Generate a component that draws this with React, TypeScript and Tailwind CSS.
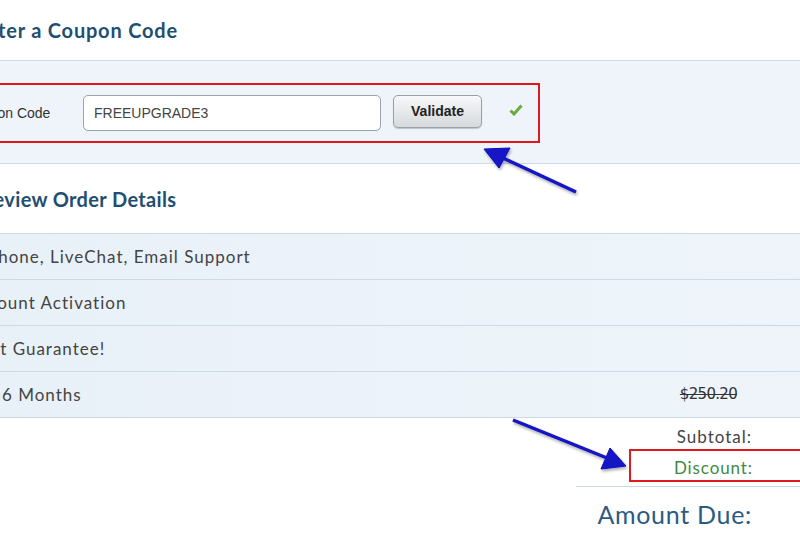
import React from "react";

const rows = [
    { text: "Phone, LiveChat, Email Support", shift: "-ml-[13px]", price: "" },
    { text: "Account Activation", shift: "-ml-[33px]", price: "" },
    { text: "Best Guarantee!", shift: "-ml-[30px]", price: "" },
    { text: "6 Months", shift: "ml-[2px]", price: "$250.20" },
];

const Arrows = () => (
    <svg className="absolute inset-0 pointer-events-none" width="800" height="533" viewBox="0 0 800 533">
        <defs>
            <filter id="sh" x="-20%" y="-20%" width="140%" height="140%">
                <feDropShadow dx="1" dy="2" stdDeviation="1.5" floodColor="#000" floodOpacity="0.35" />
            </filter>
        </defs>
        <g filter="url(#sh)" fill="#1212c4" stroke="#1212c4">
            <line x1="576" y1="192" x2="503" y2="158" strokeWidth="3.5" />
            <polygon points="484,149 510,148 499,168" strokeWidth="1" />
            <line x1="513" y1="420" x2="607" y2="458" strokeWidth="3.5" />
            <polygon points="626,466 601,469 610,448" strokeWidth="1" />
        </g>
    </svg>
);

export default function App() {
    return (
        <div className="relative w-[800px] h-[533px] overflow-hidden bg-white" style={{ fontFamily: "Lato, 'Open Sans', sans-serif" }}>
            <div className="h-[60px] flex items-center">
                <h1 className="-ml-[26px] text-[20px] font-bold tracking-[0.8px] text-[#1f4f71] whitespace-nowrap">Enter a Coupon Code</h1>
            </div>

            <div className="h-[104px] border-y border-[#cfdbe7] bg-[#eef4fa] pt-[22px]">
                <div className="-ml-[40px] w-[580px] h-[60px] border-2 border-[#e1191e] flex items-center font-['Liberation_Sans',Arial,sans-serif]">
                    <div className="w-[121px] pl-[2px] text-[14px] text-[#333] whitespace-nowrap">Coupon Code</div>
                    <div className="w-[298px] h-[36px] rounded-[5px] border border-[#98a3ad] bg-white flex items-center pl-[10px] text-[14px] text-[#444]">
                        FREEUPGRADE3
                    </div>
                    <button className="ml-[12px] w-[89px] h-[33px] -mt-[3px] rounded-[5px] border border-[#9aa0a6] bg-gradient-to-b from-[#f7f8f9] to-[#d6dadd] shadow-[0_1px_1px_rgba(0,0,0,0.2)] text-[14px] font-bold text-[#222]">
                        Validate
                    </button>
                    <svg className="ml-[27px] -mt-[6px]" width="14" height="12" viewBox="0 0 14 12">
                        <path d="M1.5 6.5 L5 10 L12.5 1.5" fill="none" stroke="#6aab3b" strokeWidth="3" />
                    </svg>
                </div>
            </div>

            <div className="h-[69px] flex items-center">
                <h2 className="-ml-[19px] text-[20px] font-bold tracking-[0.35px] text-[#1f4f71] whitespace-nowrap">Review Order Details</h2>
            </div>

            <div className="border-b border-[#cdd9e5]">
                {rows.map((r) => (
                    <div key={r.text} className="h-[46px] border-t border-[#cdd9e5] bg-gradient-to-r from-[#e9f1f8] to-[#eef4fa] flex items-center justify-between pr-[63px]">
                        <span className={`${r.shift} text-[17px] text-[#444] whitespace-nowrap tracking-[1px]`}>{r.text}</span>
                        {r.price && (
                            <span className="text-[15px] text-[#333] line-through font-['DejaVu_Sans',Verdana,sans-serif] tracking-[-0.7px]">{r.price}</span>
                        )}
                    </div>
                ))}
            </div>

            <div className="flex flex-col items-end">
                <div className="h-[31px] pt-[6px] pr-[48px] text-[17px] tracking-[1px] text-[#444]">Subtotal:</div>
                <div className="w-[171px] h-[33px] border-2 border-[#e1191e] border-r-0 flex items-center justify-end pt-[5px] pr-[47px] text-[17px] tracking-[0.9px] text-[#3f8a3f]">
                    Discount:
                </div>
                <div className="mt-[4px] w-[224px] border-t border-[#c9d6e3] h-[50px] flex items-center justify-end pt-[6px] pr-[48px] text-[25px] tracking-[0.7px] text-[#2a5c82]">
                    Amount Due:
                </div>
            </div>

            <Arrows />
        </div>
    );
}
